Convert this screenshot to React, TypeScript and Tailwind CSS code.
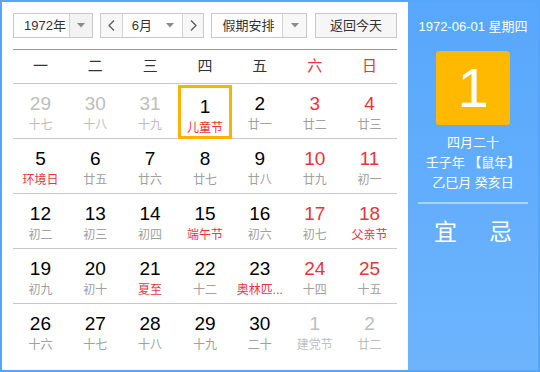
import React from "react";

type Cell = { d: number; l: string; out?: boolean; fest?: boolean; sel?: boolean };

const WEEK = ["一", "二", "三", "四", "五", "六", "日"];

const ROWS: Cell[][] = [
  [
    { d: 29, l: "十七", out: true },
    { d: 30, l: "十八", out: true },
    { d: 31, l: "十九", out: true },
    { d: 1, l: "儿童节", fest: true, sel: true },
    { d: 2, l: "廿一" },
    { d: 3, l: "廿二" },
    { d: 4, l: "廿三" },
  ],
  [
    { d: 5, l: "环境日", fest: true },
    { d: 6, l: "廿五" },
    { d: 7, l: "廿六" },
    { d: 8, l: "廿七" },
    { d: 9, l: "廿八" },
    { d: 10, l: "廿九" },
    { d: 11, l: "初一" },
  ],
  [
    { d: 12, l: "初二" },
    { d: 13, l: "初三" },
    { d: 14, l: "初四" },
    { d: 15, l: "端午节", fest: true },
    { d: 16, l: "初六" },
    { d: 17, l: "初七" },
    { d: 18, l: "父亲节", fest: true },
  ],
  [
    { d: 19, l: "初九" },
    { d: 20, l: "初十" },
    { d: 21, l: "夏至", fest: true },
    { d: 22, l: "十二" },
    { d: 23, l: "奥林匹...", fest: true },
    { d: 24, l: "十四" },
    { d: 25, l: "十五" },
  ],
  [
    { d: 26, l: "十六" },
    { d: 27, l: "十七" },
    { d: 28, l: "十八" },
    { d: 29, l: "十九" },
    { d: 30, l: "二十" },
    { d: 1, l: "建党节", out: true },
    { d: 2, l: "廿二", out: true },
  ],
];

function Caret() {
  return (
    <svg width="8" height="5" viewBox="0 0 8 5">
      <path d="M0 0 L8 0 L4 4.5 Z" fill="#8a8a8a" />
    </svg>
  );
}

export default function App() {
  return (
    <div
      className="flex h-[372px] w-[540px] border-2 border-[#55a5fb] bg-white"
      style={{ fontFamily: '"Liberation Sans", "Noto Sans CJK SC", sans-serif' }}
    >
      {/* Left: calendar */}
      <div className="flex w-[406px] flex-col px-[11px] pt-[11px]">
        {/* Controls */}
        <div className="flex h-[25px] text-[13px] text-[#333]">
          <div className="flex w-[80px] border border-[#c8c8c8]">
            <div className="flex flex-1 items-center pl-[10px]">1972年</div>
            <div className="flex w-[23px] items-center justify-center border-l border-[#d4d4d4] bg-[#f2f2f2]">
              <Caret />
            </div>
          </div>
          <div className="ml-[7px] flex w-[105px] border border-[#c8c8c8]">
            <div className="flex w-[22px] items-center justify-center border-r border-[#d4d4d4] bg-[#f7f7f7] text-[#666]">
              <svg width="7" height="11" viewBox="0 0 7 11">
                <path d="M6 0.5 L1 5.5 L6 10.5" fill="none" stroke="#555" strokeWidth="1.2" />
              </svg>
            </div>
            <div className="flex flex-1 items-center justify-between pl-[9px] pr-[8px]">
              <span>6月</span>
              <Caret />
            </div>
            <div className="flex w-[21px] items-center justify-center border-l border-[#d4d4d4] bg-[#f7f7f7]">
              <svg width="7" height="11" viewBox="0 0 7 11">
                <path d="M1 0.5 L6 5.5 L1 10.5" fill="none" stroke="#555" strokeWidth="1.2" />
              </svg>
            </div>
          </div>
          <div className="ml-[7px] flex w-[96px] border border-[#c8c8c8]">
            <div className="flex flex-1 items-center pl-[10px]">假期安排</div>
            <div className="flex w-[24px] items-center justify-center border-l border-[#d4d4d4] bg-[#f7f7f7]">
              <Caret />
            </div>
          </div>
          <div className="ml-[8px] flex w-[82px] items-center justify-center border border-[#c8c8c8] bg-[#f6f6f6]">
            返回今天
          </div>
        </div>

        {/* Weekday header */}
        <div className="mt-[11px] grid h-[35px] grid-cols-7 border-y border-t-[#5aa8fb] border-b-[#c9c9c9] text-[15px]">
          {WEEK.map((w, i) => (
            <div
              key={w}
              className={`flex items-center justify-center ${i >= 5 ? "text-[#e8343a]" : "text-[#333]"}`}
            >
              {w}
            </div>
          ))}
        </div>

        {/* Days */}
        {ROWS.map((row, ri) => (
          <div
            key={ri}
            className={`grid h-[55px] grid-cols-7 ${ri < ROWS.length - 1 ? "border-b border-[#c9c9c9]" : ""}`}
          >
            {row.map((c, ci) => {
              const weekend = ci >= 5;
              const numColor = c.out ? "text-[#bdbdbd]" : weekend ? "text-[#e8343a]" : "text-black";
              const lunColor = c.out ? "text-[#bdbdbd]" : c.fest ? "text-[#e8343a]" : "text-[#a0a0a0]";
              return (
                <div key={ci} className="flex justify-center pt-[1px]">
                  <div
                    className={`flex w-[54px] flex-col items-center pt-[8px] ${
                      c.sel ? "border-[3px] border-[#fcb300] pt-[5px]" : ""
                    }`}
                  >
                    <span className={`text-[19px] leading-[22px] ${numColor}`}>{c.d}</span>
                    <span className={`mt-[2px] whitespace-nowrap text-[12px] leading-[16px] ${lunColor}`}>{c.l}</span>
                  </div>
                </div>
              );
            })}
          </div>
        ))}
      </div>

      {/* Right: detail panel */}
      <div className="flex flex-1 flex-col items-center bg-gradient-to-b from-[#57a7fc] to-[#6db4fd] text-white">
        <div className="mt-[16px] text-[13px] leading-[18px]">1972-06-01 星期四</div>
        <div className="mt-[15px] flex h-[74px] w-[74px] items-center justify-center rounded-[3px] bg-[#ffb900] text-[56px] font-light leading-none">
          1
        </div>
        <div className="mt-[8px] flex flex-col items-center text-[13px] leading-[20px]">
          <span>四月二十</span>
          <span>壬子年 【鼠年】</span>
          <span>乙巳月 癸亥日</span>
        </div>
        <div className="mt-[9px] h-[2px] w-[110px] bg-[#a9d2fd]" />
        <div className="mt-[15px] flex w-[78px] justify-between text-[23px] leading-[26px]">
          <span>宜</span>
          <span>忌</span>
        </div>
      </div>
    </div>
  );
}
